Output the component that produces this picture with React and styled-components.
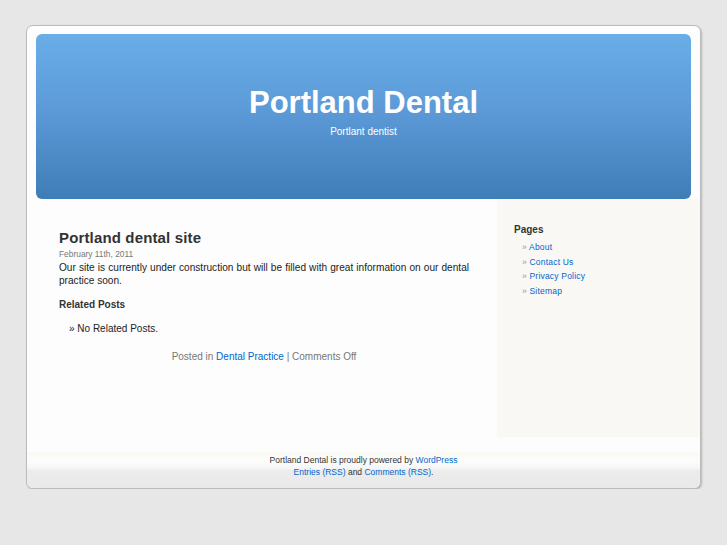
import React from "react";
import styled, { createGlobalStyle } from "styled-components";

const GlobalStyle = createGlobalStyle`
  html, body {
    margin: 0;
    padding: 0;
    background: #e7e7e7;
    font-family: "Liberation Sans", Arial, sans-serif;
    color: #333;
  }
  a {
    color: #0066cc;
    text-decoration: none;
  }
`;

const Page = styled.div`
  box-sizing: border-box;
  width: 675px;
  margin: 25px 0 0 26px;
  background: #fdfdfd;
  border: 1px solid #bcbcbc;
  border-radius: 7px;
  box-shadow: 1px 1px 2px rgba(0, 0, 0, 0.22);
  overflow: hidden;
`;

const Header = styled.header`
  height: 165px;
  margin: 8px 9px 0 9px;
  border-radius: 6px;
  background: linear-gradient(#69aee8 0%, #5c9bd8 45%, #3f7db7 100%);
  display: flex;
  flex-direction: column;
  align-items: center;
  color: #fff;
`;

const SiteTitle = styled.h1`
  margin: 51px 0 0;
  font-size: 31px;
  line-height: 36px;
  font-weight: bold;
`;

const Tagline = styled.div`
  margin-top: 5px;
  font-size: 10px;
  line-height: 12px;
`;

const Body = styled.div`
  display: flex;
  min-height: 238px;
`;

const Main = styled.main`
  flex: 0 0 470px;
  box-sizing: border-box;
  padding: 30px 28px 0 32px;
`;

const PostTitle = styled.h2`
  margin: 0;
  font-size: 15px;
  line-height: 18px;
  letter-spacing: 0.15px;
  font-weight: bold;
  color: #333;
`;

const PostDate = styled.div`
  margin-top: 1.5px;
  font-size: 8.4px;
  line-height: 11px;
  color: #777;
`;

const Entry = styled.p`
  margin: 1px 0 0;
  font-size: 10.1px;
  line-height: 13px;
  text-align: justify;
  color: #222;
`;

const Related = styled.h3`
  margin: 11.5px 0 0;
  font-size: 10px;
  line-height: 13px;
  font-weight: bold;
  color: #333;
`;

const RelatedList = styled.ul`
  list-style: none;
  margin: 11px 0 0;
  padding: 0 0 0 10px;
  font-size: 10px;
  line-height: 13px;
  color: #222;
`;

const PostMeta = styled.p`
  margin: 15px 0 0;
  text-align: center;
  font-size: 10px;
  line-height: 13px;
  color: #777;
`;

const Sidebar = styled.aside`
  flex: 1;
  box-sizing: border-box;
  background: #f9f8f4;
  padding: 24px 0 0 17px;
`;

const SideHeading = styled.h2`
  margin: 0;
  font-size: 10px;
  line-height: 13px;
  font-weight: bold;
  color: #333;
`;

const SideList = styled.ul`
  list-style: none;
  margin: 4px 0 0;
  padding: 0 0 0 8px;
  font-size: 8.5px;
  line-height: 14.5px;
  letter-spacing: 0.2px;
`;

const Bullet = styled.span`
  color: #999;
`;

const Footer = styled.footer`
  margin-top: 15px;
  padding: 2px 0 10px;
  text-align: center;
  font-size: 8.5px;
  line-height: 12px;
  color: #333;
  background: linear-gradient(
    #faf9f4 0%,
    #fdfdfb 25%,
    #f6f6f6 45%,
    #ececec 52%,
    #e9e9e9 100%
  );
`;

const pages = ["About", "Contact Us", "Privacy Policy", "Sitemap"];

export default function App() {
  return (
    <>
      <GlobalStyle />
      <Page>
        <Header>
          <SiteTitle>Portland Dental</SiteTitle>
          <Tagline>Portlant dentist</Tagline>
        </Header>
        <Body>
          <Main>
            <PostTitle>Portland dental site</PostTitle>
            <PostDate>February 11th, 2011</PostDate>
            <Entry>
              Our site is currently under construction but will be filled with
              great information on our dental practice soon.
            </Entry>
            <Related>Related Posts</Related>
            <RelatedList>
              <li>» No Related Posts.</li>
            </RelatedList>
            <PostMeta>
              Posted in <a href="#">Dental Practice</a> | Comments Off
            </PostMeta>
          </Main>
          <Sidebar>
            <SideHeading>Pages</SideHeading>
            <SideList>
              {pages.map((p) => (
                <li key={p}>
                  <Bullet>»</Bullet> <a href="#">{p}</a>
                </li>
              ))}
            </SideList>
          </Sidebar>
        </Body>
        <Footer>
          Portland Dental is proudly powered by <a href="#">WordPress</a>
          <br />
          <a href="#">Entries (RSS)</a> and <a href="#">Comments (RSS)</a>.
        </Footer>
      </Page>
    </>
  );
}
